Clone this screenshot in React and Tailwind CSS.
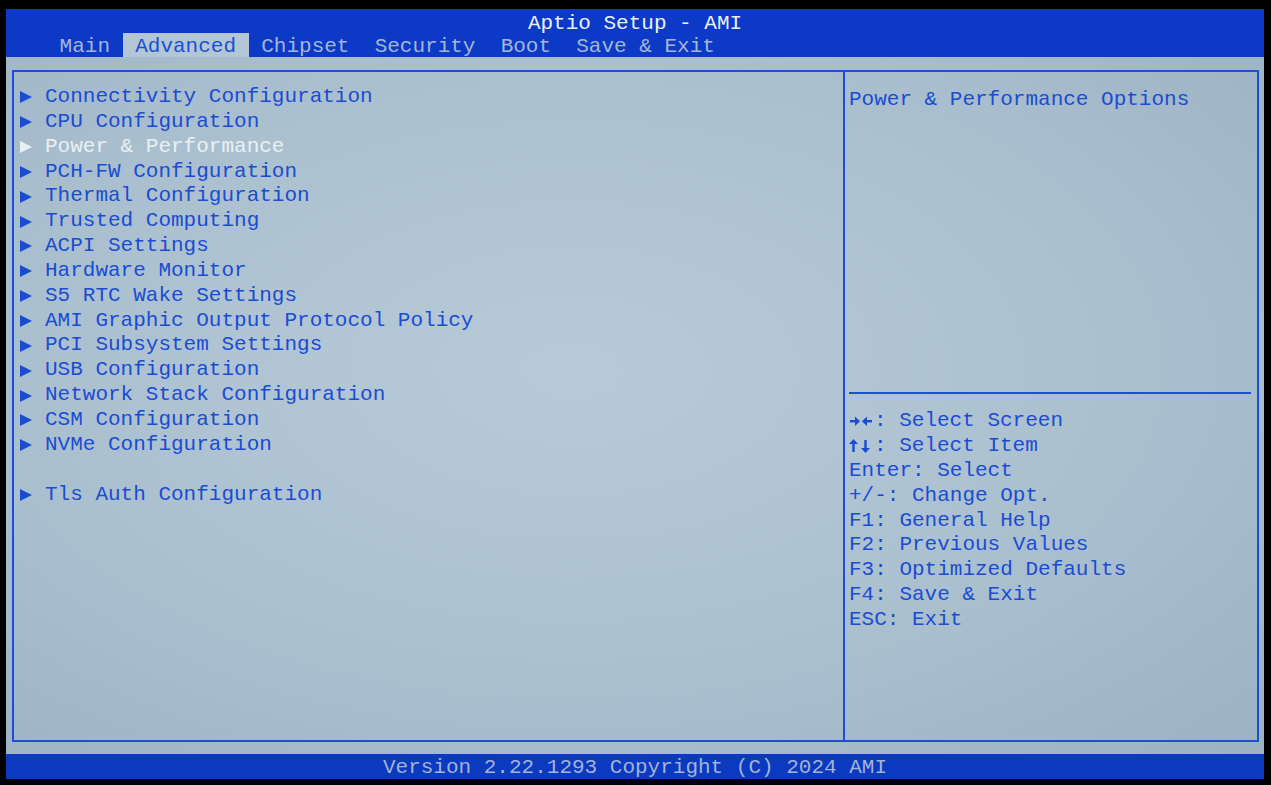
const tabs = ["Main", "Advanced", "Chipset", "Security", "Boot", "Save & Exit"];

const items = [
  "Connectivity Configuration",
  "CPU Configuration",
  "Power & Performance",
  "PCH-FW Configuration",
  "Thermal Configuration",
  "Trusted Computing",
  "ACPI Settings",
  "Hardware Monitor",
  "S5 RTC Wake Settings",
  "AMI Graphic Output Protocol Policy",
  "PCI Subsystem Settings",
  "USB Configuration",
  "Network Stack Configuration",
  "CSM Configuration",
  "NVMe Configuration",
  null,
  "Tls Auth Configuration",
];

const help = [
  ["lr", ": Select Screen"],
  ["ud", ": Select Item"],
  ["", "Enter: Select"],
  ["", "+/-: Change Opt."],
  ["", "F1: General Help"],
  ["", "F2: Previous Values"],
  ["", "F3: Optimized Defaults"],
  ["", "F4: Save & Exit"],
  ["", "ESC: Exit"],
];

function Arrow() {
  return (
    <svg width="12" height="12" viewBox="0 0 12 12" className="shrink-0">
      <path d="M0 0L12 6L0 12Z" fill="currentColor" />
    </svg>
  );
}

// bold key arrows drawn as icons: → ← and ↑ ↓
function KeyArrows({ kind }) {
  return (
    <svg width="25" height="24" viewBox="0 0 25 24" className="shrink-0">
      {kind === "lr" ? (
        <g fill="currentColor">
          <rect x="1" y="11" width="6" height="2.4" />
          <path d="M6 7.5L11 12.2L6 16.9Z" />
          <rect x="17" y="11" width="6" height="2.4" />
          <path d="M18 7.5L13 12.2L18 16.9Z" />
        </g>
      ) : (
        <g fill="currentColor">
          <path d="M4.5 5L9 10H0Z" />
          <rect x="3.3" y="9" width="2.4" height="9" />
          <path d="M16.5 19L21 14H12Z" />
          <rect x="15.3" y="6" width="2.4" height="9" />
        </g>
      )}
    </svg>
  );
}

export default function App() {
  return (
    <div className="w-[1271px] h-[785px] bg-black pt-[9px] pl-[6px] pr-[7px] pb-[6px] font-['Liberation_Mono',monospace] text-[21px] whitespace-pre">
      <div className="flex h-full flex-col">
        {/* header */}
        <header className="h-[48px] bg-[#0c3ac6]">
          <div className="h-[24px] pt-[2px] leading-[26px] text-center text-[#eaf0fa]">
            Aptio Setup - AMI
          </div>
          <div className="flex h-[24px] pl-[41px]">
            {tabs.map((t) => (
              <div
                key={t}
                className={
                  t === "Advanced"
                    ? "h-[24px] px-[12.6px] pt-[2px] leading-[24px] bg-[#b2c6d5] text-[#1d4fd2]"
                    : "h-[24px] px-[12.6px] pt-[2px] leading-[24px] text-[#a3b6d6]"
                }
              >
                {t}
              </div>
            ))}
          </div>
        </header>

        {/* body */}
        <main className="flex-1 bg-[radial-gradient(ellipse_at_45%_45%,#b7cad8_0%,#abc0cf_55%,#9bb2c4_100%)] pt-[13px] pl-[6px] pr-[5px] pb-[12px]">
          <div className="flex h-full border-2 border-[#1b4fd6]">
            <div className="w-[831px] border-r-2 border-[#1b4fd6] pt-[13px] pl-[6px]">
              {items.map((it, i) =>
                it ? (
                  <div
                    key={i}
                    className={
                      it === "Power & Performance"
                        ? "flex h-[24.85px] items-center text-[#e9f0f4]"
                        : "flex h-[24.85px] items-center text-[#1a4cd2]"
                    }
                  >
                    <span className="flex w-[25px] items-center">
                      <Arrow />
                    </span>
                    <span className="leading-[24.85px]">{it}</span>
                  </div>
                ) : (
                  <div key={i} className="h-[24.85px]" />
                )
              )}
            </div>

            <div className="flex flex-1 flex-col pl-[4px] text-[#1a4cd2]">
              <div className="h-[320px] pt-[15px] leading-[25px]">
                Power &amp; Performance Options
              </div>
              <div className="mr-[6px] h-[2px] bg-[#1b4fd6]" />
              <div className="pt-[15px]">
                {help.map(([a, b], i) => (
                  <div key={i} className="flex h-[24.9px] items-center leading-[24.9px]">
                    {a && <KeyArrows kind={a} />}
                    <span>{b}</span>
                  </div>
                ))}
              </div>
            </div>
          </div>
        </main>

        {/* footer */}
        <footer className="h-[25px] bg-[#0b39c0] text-center leading-[27px] text-[#a2b3d6]">
          Version 2.22.1293 Copyright (C) 2024 AMI
        </footer>
      </div>
    </div>
  );
}
